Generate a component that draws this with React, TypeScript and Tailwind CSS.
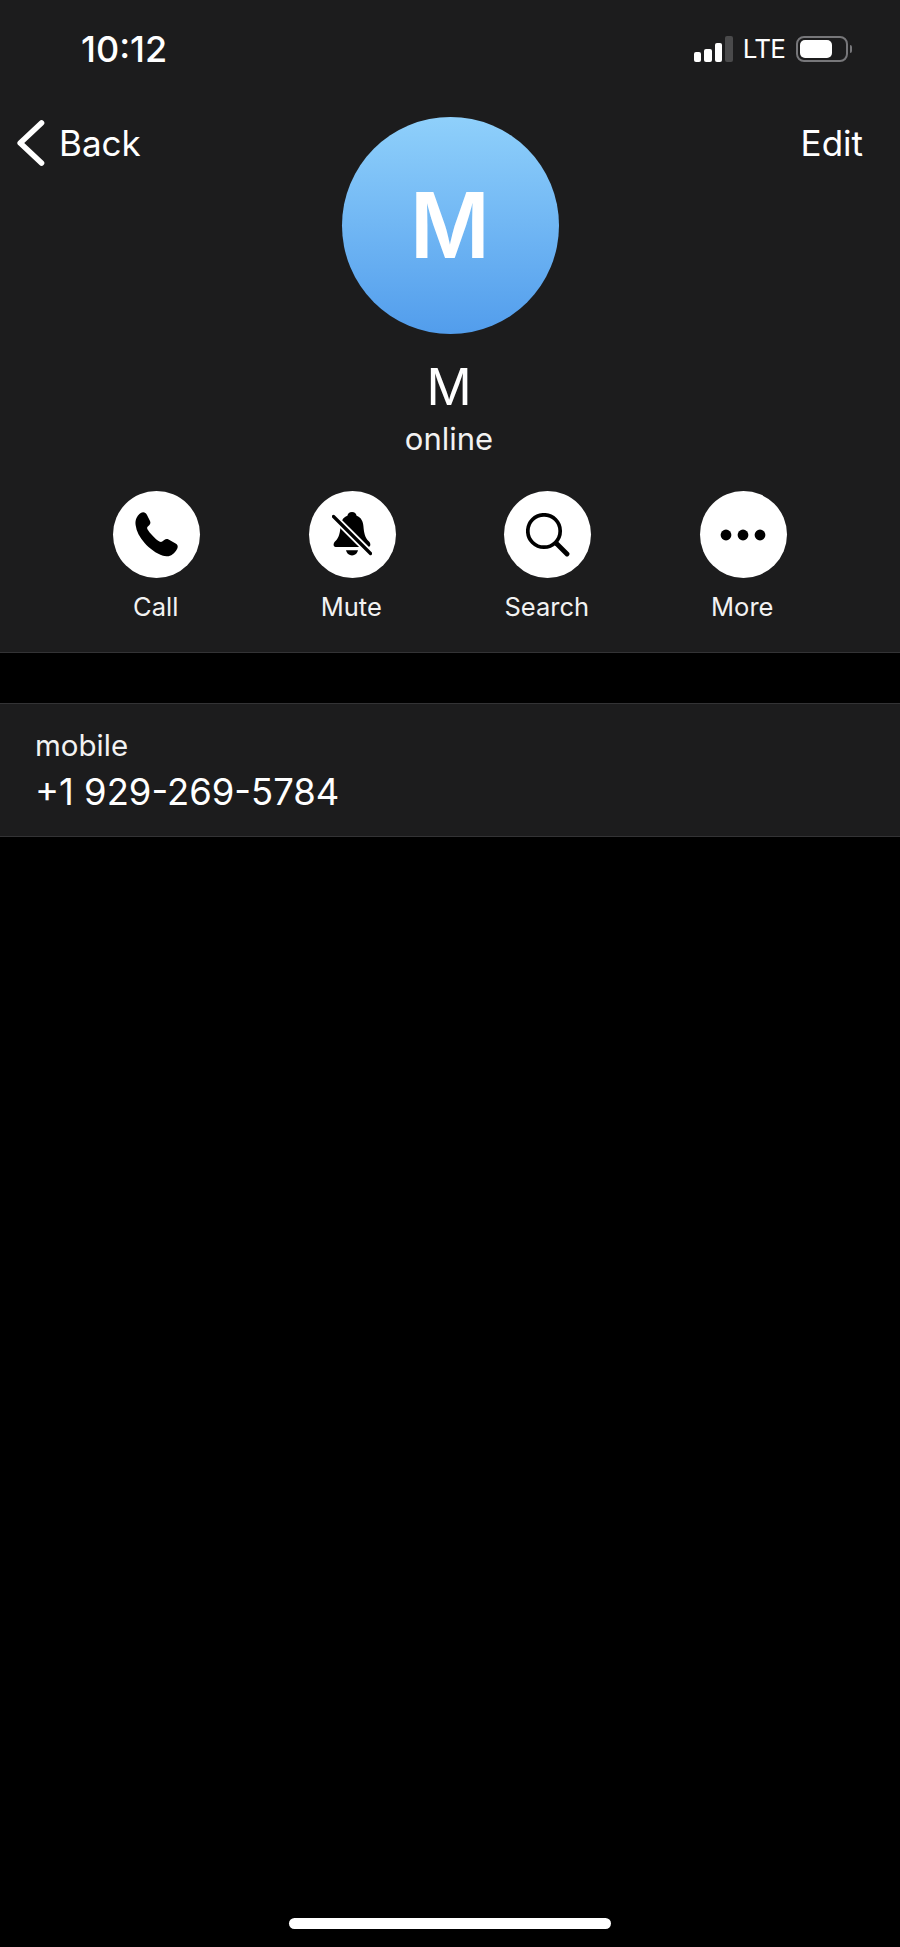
const font = "font-['Inter','Liberation_Sans',sans-serif]";

const BackChevron = () => (
  <svg width="28" height="46" viewBox="0 0 28 46" fill="none" stroke="#fff" className="ml-[17px] shrink-0">
    <path d="M24.5 3 L3.2 23 L24.5 43" strokeWidth="5.6" strokeLinecap="round" strokeLinejoin="round" />
  </svg>
);

const PhoneIcon = () => (
  <svg width="43" height="45" viewBox="0 0 43 45" fill="#000">
    <path d="M1.5 6 C3 3 5.5 0.5 8 0.3 C9.8 0.2 11 1.2 12 3 L15 9 C15.8 10.8 15.4 12 14.2 13.2 L12.6 14.8 C12 15.6 12 16.4 12.6 17.4 C14.4 20.6 20.4 27 24.4 29.6 C25.6 30.3 26.4 30.2 27.2 29.6 L29.2 28 C30.6 27 32 26.8 33.6 27.6 L40.6 31.6 C42.4 32.6 43 33.8 42.6 35.4 C41.8 38.4 38.8 42 35.6 43.4 C33.4 44.4 30.8 44.6 28 43.8 C21 41.6 14.6 36.6 9.4 30.8 C4.6 25.4 1.4 19.2 0.6 13 C0.2 10.4 0.6 8 1.5 6 Z" />
  </svg>
);

const MutedBellIcon = () => (
  <svg width="40" height="45" viewBox="0 0 40 45" fill="#000">
    <path d="M20 0 C22.6 0 24.2 1.6 24.6 3.8 C29.4 5.6 31 9.6 31.4 14 C32 20 32.6 25.6 37 29.6 C39 31.6 38.8 35 36.4 35 L3.6 35 C1.2 35 1 31.6 3 29.6 C7.4 25.6 8 20 8.6 14 C9 9.6 10.6 5.6 15.4 3.8 C15.8 1.6 17.4 0 20 0 Z" />
    <path d="M14 38.2 L26 38.2 C25.4 41 22.9 43.4 20 43.4 C17.1 43.4 14.6 41 14 38.2 Z" />
    {/* strike with a white gap either side */}
    <path d="M-1 2 L41 44" stroke="#fff" strokeWidth="7" />
    <path d="M1.5 4.5 L38.5 41.5" stroke="#000" strokeWidth="3.2" strokeLinecap="round" />
  </svg>
);

const SearchIcon = () => (
  <svg width="44" height="44" viewBox="0 0 44 44" fill="none" stroke="#000">
    <circle cx="18" cy="18" r="16.2" strokeWidth="3.7" />
    <path d="M30.5 30.5 L41 41" strokeWidth="4.8" strokeLinecap="round" />
  </svg>
);

const DotsIcon = () => (
  <svg width="46" height="12" viewBox="0 0 46 12" fill="#000">
    <circle cx="6" cy="6" r="5.4" />
    <circle cx="23" cy="6" r="5.4" />
    <circle cx="40" cy="6" r="5.4" />
  </svg>
);

const actions = [
  { label: "Call", icon: <PhoneIcon /> },
  { label: "Mute", icon: <MutedBellIcon /> },
  { label: "Search", icon: <SearchIcon /> },
  { label: "More", icon: <DotsIcon /> },
];

const App = () => {
  return (
    <div className={`${font} relative h-[1947px] w-[900px] overflow-hidden bg-black text-white`}>
      <header className="h-[653px] border-b border-[#333335] bg-[#1c1c1d]">
        {/* status bar */}
        <div className="flex h-[98px] items-center justify-between pl-[81px] pr-[48px]">
          <span className="text-[36px] leading-none font-medium">10:12</span>
          <div className="flex items-center">
            <div className="flex items-end gap-[3px]">
              <span className="h-[10px] w-[7.5px] rounded-[2px] bg-white" />
              <span className="h-[13px] w-[7.5px] rounded-[2px] bg-white" />
              <span className="h-[19px] w-[7.5px] rounded-[2px] bg-white" />
              <span className="h-[26px] w-[7.5px] rounded-[2px] bg-[#4a4a4b]" />
            </div>
            <span className="ml-[10px] text-[26px] leading-none tracking-[-0.8px]">LTE</span>
            <div className="ml-[11px] flex items-center">
              <div className="flex h-[26px] w-[52px] items-center rounded-[8px] border-2 border-[#77777a] pl-[2px]">
                <div className="h-[18px] w-[32px] rounded-[5px] bg-white" />
              </div>
              <span className="ml-[2px] h-[8px] w-[2px] rounded-r-full bg-[#77777a]" />
            </div>
          </div>
        </div>

        {/* nav + avatar */}
        <div className="mt-[19px] grid grid-cols-[1fr_217px_1fr] items-start">
          <div className="flex h-[52px] items-center">
            <BackChevron />
            <span className="ml-[14px] text-[35px] leading-none">Back</span>
          </div>
          <div className="flex h-[217px] w-[217px] items-center justify-center rounded-full bg-gradient-to-b from-[#8fd0fb] to-[#529dec]">
            <span className="scale-x-[0.95] text-[91px] leading-none font-semibold">M</span>
          </div>
          <div className="flex h-[52px] items-center justify-end pr-[37px]">
            <span className="text-[35px] leading-none">Edit</span>
          </div>
        </div>

        <div className="mt-[25px] pr-[2px] text-center text-[50px] leading-[56px]">M</div>
        <div className="mt-[5px] pr-[2px] text-center text-[31px] leading-[38px] text-[#f2f2f2]">online</div>

        {/* action buttons */}
        <div className="mt-[33px] grid grid-cols-4 px-[59px]">
          {actions.map((action) => (
            <div key={action.label} className="flex flex-col items-center">
              <div className="flex h-[87px] w-[87px] items-center justify-center rounded-full bg-white">
                {action.icon}
              </div>
              <span className="mt-[14px] pr-[2px] text-[25.5px] leading-[30px] text-[#f2f2f2]">{action.label}</span>
            </div>
          ))}
        </div>
      </header>

      <section className="mt-[50px] h-[134px] border-y border-[#333335] bg-[#1c1c1d] pl-[35px] pt-[23px]">
        <div className="text-[29.5px] leading-[36px] text-[#f2f2f2]">mobile</div>
        <div className="mt-[7px] text-[36.4px] leading-[44px]">+1 929-269-5784</div>
      </section>

      {/* home indicator */}
      <div className="absolute bottom-[18px] left-[289px] h-[11px] w-[322px] rounded-full bg-white" />
    </div>
  );
};

export default App;
